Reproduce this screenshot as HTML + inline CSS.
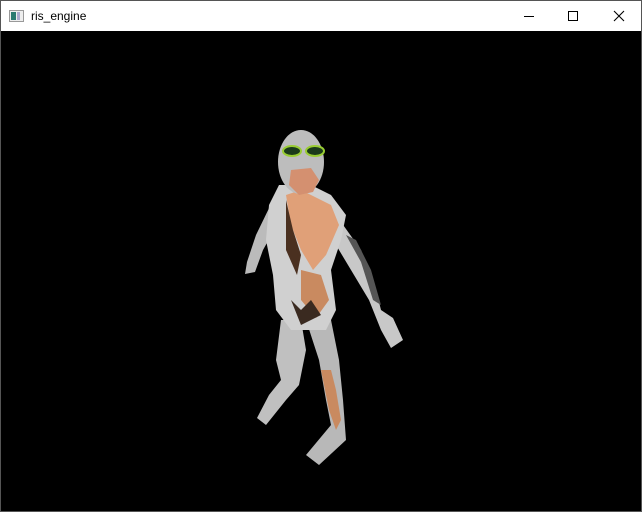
<!DOCTYPE html>
<html><head><style>
html,body{margin:0;padding:0;width:642px;height:512px;overflow:hidden;background:#000;}
.win{position:absolute;left:0;top:0;width:640px;height:510px;border:1px solid #555;background:#000;}
.tb{position:absolute;left:0;top:0;width:640px;height:30px;background:#fff;font-family:"Liberation Sans",sans-serif;font-size:12px;}
.tb .t{position:absolute;left:30px;top:8px;color:#000;}
</style></head><body>
<div class="win">
<div class="tb">
<svg width="640" height="30" style="position:absolute;left:0;top:0">
<rect x="8.5" y="9.5" width="14" height="11" fill="#eee" stroke="#999"/>
<rect x="10" y="11" width="5" height="8" fill="#2a7a70"/>
<rect x="16" y="11" width="3" height="8" fill="#aac"/>
<line x1="523" y1="15.5" x2="533" y2="15.5" stroke="#000"/>
<rect x="567.5" y="10.5" width="9" height="9" fill="none" stroke="#000"/>
<path d="M613 10L623 20M623 10L613 20" stroke="#000" stroke-width="1.1"/>
</svg>
<div class="t">ris_engine</div>
</div>
<svg width="640" height="480" style="position:absolute;left:0;top:30px">
<g transform="translate(0,-31)">
<!-- arms -->
<path d="M272 200 L255 235 L246 262 L244 274 L254 272 L262 250 L272 232 Z" fill="#bbb"/>
<path d="M335 215 L360 250 L375 290 L380 310 L392 318 L402 340 L390 348 L380 330 L368 300 L350 270 L335 245 Z" fill="#c8c8c8"/>
<path d="M345 235 L360 262 L372 300 L380 305 L370 270 L355 240 Z" fill="#555"/>
<!-- legs -->
<path d="M280 320 L275 360 L280 380 L268 395 L256 418 L265 425 L285 400 L298 385 L305 350 L300 320 Z" fill="#c0c0c0"/>
<path d="M305 320 L318 360 L325 400 L330 425 L305 455 L318 465 L345 440 L342 400 L338 360 L330 320 Z" fill="#b8b8b8"/>
<path d="M320 370 L328 410 L335 430 L340 420 L335 390 L330 370 Z" fill="#c98a60"/>
<!-- torso -->
<path d="M278 185 L268 205 L265 240 L272 275 L275 310 L290 330 L325 330 L335 310 L330 270 L340 240 L345 215 L330 195 L310 185 Z" fill="#d0d0d0"/>
<path d="M285 195 L300 190 L330 205 L338 225 L325 255 L312 270 L300 250 L290 225 Z" fill="#e0a078"/>
<path d="M285 200 L292 230 L300 255 L296 275 L285 250 Z" fill="#4a3020"/>
<path d="M300 270 L320 275 L328 300 L315 318 L300 300 Z" fill="#c98a60"/>
<path d="M290 300 L300 310 L310 300 L320 315 L300 325 Z" fill="#3a2a20"/>
<!-- head -->
<ellipse cx="300" cy="162" rx="23" ry="32" fill="#bdbdbd"/>
<path d="M290 170 L310 168 L318 180 L312 192 L298 195 L288 185 Z" fill="#d49070"/>
<ellipse cx="291" cy="151" rx="9" ry="5" fill="#1a3a1a" stroke="#9c3" stroke-width="2"/>
<ellipse cx="314" cy="151" rx="9" ry="5" fill="#1a3a1a" stroke="#9c3" stroke-width="2"/>
</g>
</svg>
</div>
</body></html>
